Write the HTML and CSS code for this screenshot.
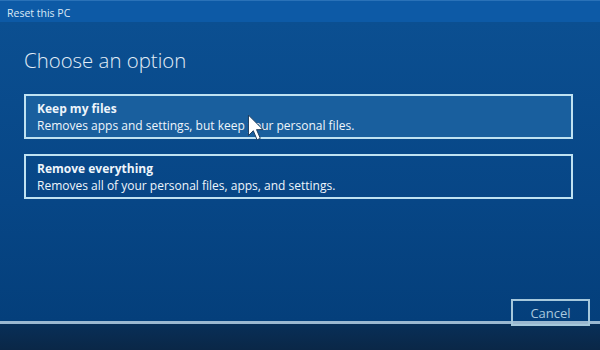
FILE: index.html
```html
<!DOCTYPE html>
<html lang="en">
<head>
    <meta charset="UTF-8">
    <meta name="viewport" content="width=device-width, initial-scale=1.0">
    <title>Reset this PC</title>
    <link rel="stylesheet" href="styles.css">
</head>
<body>
    <div class="window">
        <div class="titlebar">Reset this PC</div>

        <div class="main">
            <h1>Choose an option</h1>

            <div class="option option-hover">
                <div class="option-title">Keep my files</div>
                <div class="option-desc">Removes apps and settings, but keep your personal files.</div>
            </div>

            <div class="option">
                <div class="option-title">Remove everything</div>
                <div class="option-desc">Removes all of your personal files, apps, and settings.</div>
            </div>
        </div>

        <div class="footer"></div>

        <button class="cancel-btn">Cancel</button>

        <svg class="cursor" width="18" height="28" viewBox="0 0 16 26">
            <path d="M1 1 L1 20 L5.5 15.5 L9 24 L12 22.6 L8.5 14.5 L14.5 14.5 Z" fill="#fff" stroke="#1b3a5a" stroke-width="0.9"/>
        </svg>
    </div>
</body>
</html>
```

FILE: styles.css
```css
body {
    margin: 0;
    padding: 0;
    font-family: "Open Sans", "Noto Sans", Arial, sans-serif;
    background-color: #0a4a8a;
}

.window {
    position: relative;
    width: 600px;
    height: 350px;
    display: flex;
    flex-direction: column;
    overflow: hidden;
}

.titlebar {
    height: 22px;
    line-height: 24px;
    padding-left: 7px;
    font-size: 10.5px;
    color: #dbe9f6;
    background-color: #0d5aa6;
    border-top: 1px solid #2a72b8;
    box-sizing: border-box;
}

.main {
    height: 299px;
    padding: 0 27px 0 24px;
    background: linear-gradient(#0b4f91, #074686 60%, #043f7b);
    box-sizing: border-box;
}

h1 {
    margin: 24px 0 20px 0;
    font-size: 20.4px;
    line-height: 28px;
    font-weight: 300;
    color: #e3eef8;
}

.option {
    border: 2px solid #bfe2f2;
    padding: 4px 11px 3px 11px;
    margin-bottom: 15px;
    color: #eef5fb;
}

.option-hover {
    background-color: #195f9e;
}

.option-title {
    font-size: 12px;
    line-height: 17px;
    font-weight: 700;
}

.option-desc {
    font-size: 12px;
    line-height: 17px;
}

.footer {
    flex: 1;
    border-top: 3px solid #9bb8d0;
    background: linear-gradient(#082f58, #0a2747);
}

.cancel-btn {
    position: absolute;
    left: 511px;
    top: 299px;
    width: 79px;
    height: 27px;
    border: 2px solid #a6c8dc;
    background: transparent;
    color: #a9c8de;
    font-family: "Open Sans", "Noto Sans", Arial, sans-serif;
    font-size: 13px;
    padding: 0;
}

.cursor {
    position: absolute;
    left: 247px;
    top: 114px;
}
```
